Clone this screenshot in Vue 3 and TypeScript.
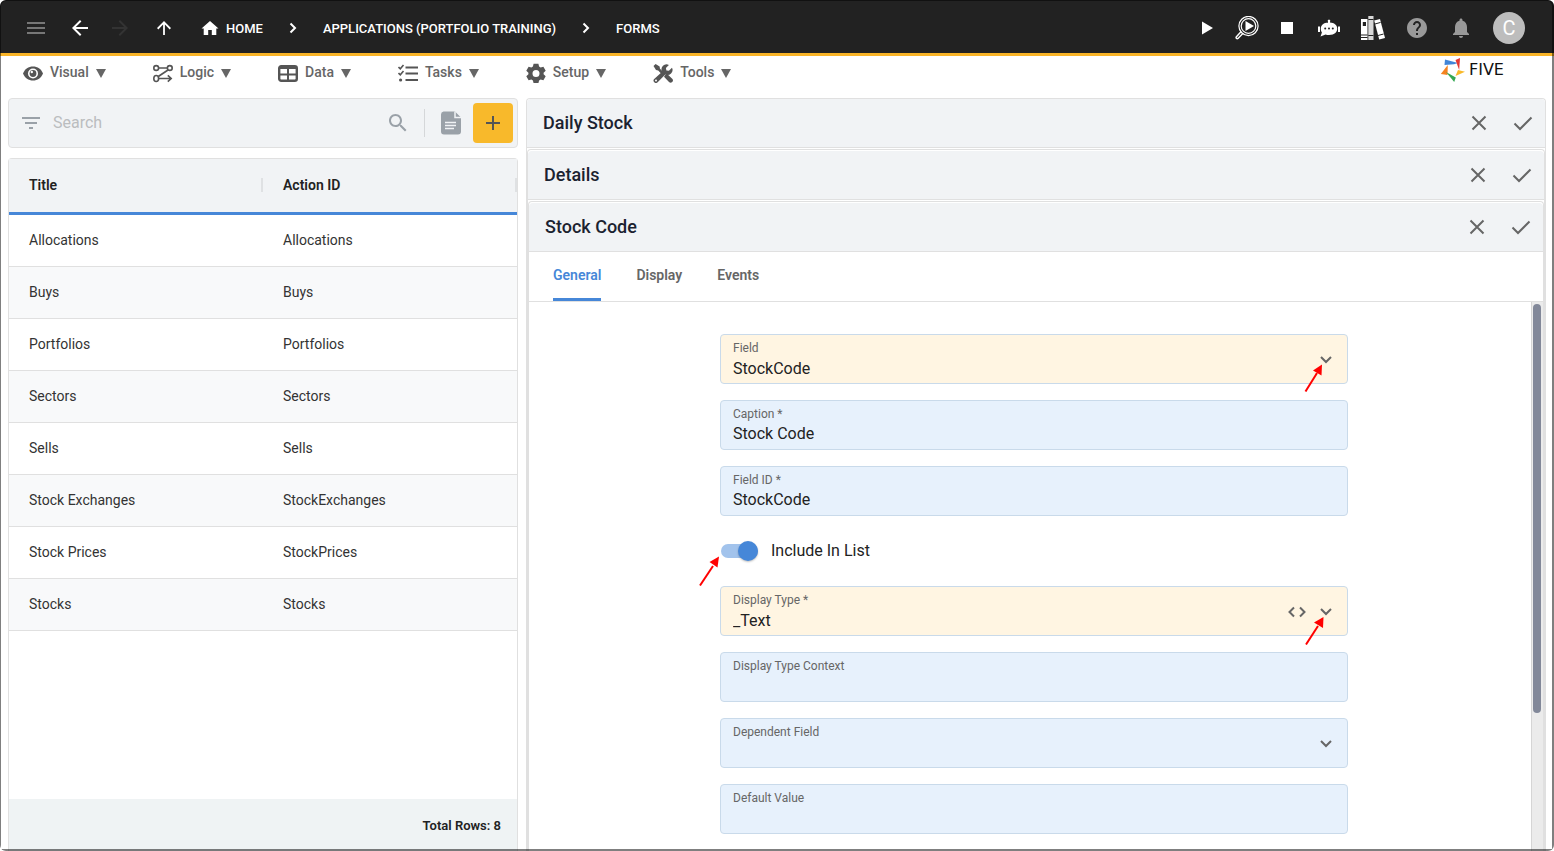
<script setup lang="ts">
import { ref } from 'vue'

interface MenuItem {
  label: string
  icon: string
}

interface Row {
  title: string
  actionId: string
}

const menu: MenuItem[] = [
  { label: 'Visual', icon: 'eye' },
  { label: 'Logic', icon: 'flow' },
  { label: 'Data', icon: 'grid' },
  { label: 'Tasks', icon: 'list' },
  { label: 'Setup', icon: 'gear' },
  { label: 'Tools', icon: 'tools' },
]

const rows: Row[] = [
  { title: 'Allocations', actionId: 'Allocations' },
  { title: 'Buys', actionId: 'Buys' },
  { title: 'Portfolios', actionId: 'Portfolios' },
  { title: 'Sectors', actionId: 'Sectors' },
  { title: 'Sells', actionId: 'Sells' },
  { title: 'Stock Exchanges', actionId: 'StockExchanges' },
  { title: 'Stock Prices', actionId: 'StockPrices' },
  { title: 'Stocks', actionId: 'Stocks' },
]

const tabs: string[] = ['General', 'Display', 'Events']
const activeTab = ref('General')

const search = ref('')
const field = ref('StockCode')
const caption = ref('Stock Code')
const fieldId = ref('StockCode')
const includeInList = ref(true)
const displayType = ref('_Text')
const displayContext = ref('')
const dependentField = ref('')
const defaultValue = ref('')
</script>

<template>
  <div class="page">
    <header class="topbar">
      <button class="icon-btn dim" aria-label="Menu">
        <svg viewBox="0 0 24 24"><path d="M3 18h18v-2H3v2zm0-5h18v-2H3v2zm0-7v2h18V6H3z" /></svg>
      </button>
      <div class="history">
        <button class="icon-btn" aria-label="Back">
          <svg viewBox="0 0 24 24"><path d="M20 11H7.8l5.6-5.6L12 4l-8 8 8 8 1.4-1.4L7.8 13H20z" /></svg>
        </button>
        <button class="icon-btn faint" aria-label="Forward">
          <svg viewBox="0 0 24 24"><path d="M4 11h12.2l-5.6-5.6L12 4l8 8-8 8-1.4-1.4 5.6-5.6H4z" /></svg>
        </button>
      </div>
      <button class="icon-btn" aria-label="Up">
        <svg viewBox="0 0 24 24"><path d="M11.1 19V8.6l-4.8 4.8L5 12.1 12 5l7 7.1-1.3 1.3-4.8-4.8V19z" /></svg>
      </button>
      <nav class="crumbs" aria-label="Breadcrumb">
        <a href="#home" class="crumb home">
          <svg viewBox="0 0 24 24"><path d="M10.200 19v-5h3.600v5h4.500v-6.500h2.200L12 5l-8.500 7.500h2.200V19z" /></svg>
          <span>HOME</span>
        </a>
        <svg class="sep" viewBox="0 0 8 12"><path d="M1.500 1.500L6 6l-4.500 4.500" /></svg>
        <a href="#applications" class="crumb">APPLICATIONS (PORTFOLIO TRAINING)</a>
        <svg class="sep" viewBox="0 0 8 12"><path d="M1.500 1.500L6 6l-4.500 4.500" /></svg>
        <a href="#forms" class="crumb">FORMS</a>
      </nav>
      <div class="run">
        <button class="icon-btn" aria-label="Run">
          <svg viewBox="0 0 24 24"><path d="M7 5.5v13L18 12z" /></svg>
        </button>
        <button class="icon-btn" aria-label="Inspect">
          <svg viewBox="0 0 24 24">
            <g fill="none" stroke="#fff">
              <circle cx="13.5" cy="10" r="9.6" stroke-width="1.2" />
              <circle cx="13.5" cy="10" r="7.3" stroke-width="1.2" />
              <path d="M6.2 15.6l-5 5.4c-.6 1 .8 2.2 1.8 1.4l5.1-5.2" stroke-width="1.4" />
            </g>
            <path d="M10.5 5v10l8.5-5z" />
          </svg>
        </button>
        <button class="icon-btn" aria-label="Stop">
          <svg viewBox="0 0 24 24"><path d="M6 6h12v12H6z" /></svg>
        </button>
      </div>
      <div class="tools">
        <button class="icon-btn" aria-label="Assistant">
          <svg viewBox="0 0 24 24">
            <path d="M11 7V5.700a1.300 1.300 0 1 1 2 0V6.500c4.300.3 6.800 2.300 7.200 5.500.3 4-2.500 7-8.200 7-1.400 0-2.300-.1-3.400-.5L3.500 20.500l1.400-4C4 15.200 3.700 13.700 3.800 12 4.200 9 6.700 6.800 11 6.500zM1 10.500h2v5.500H1zM21 10.500h2V16h-2z" />
            <g fill="#222"><circle cx="8.200" cy="12.600" r="1" /><circle cx="12" cy="12.600" r="1" /><circle cx="15.800" cy="12.600" r="1" /></g>
          </svg>
        </button>
        <button class="icon-btn" aria-label="Library">
          <svg viewBox="0 0 24 24">
            <path d="M0 3h6.500v21H0z" />
            <path d="M7.300 0h5.200v24H7.300z" fill="#d8d8d8" />
            <path d="M13.200 4.500l5.800-1.600L24 22l-5.800 1.600z" />
            <g stroke="#222" fill="none">
              <path d="M0 19h6.500M0 21.500h6.500M7.300 3.500h5.200M7.300 19.500h5.200M14 8l5.600-1.600M17 19.500l5.600-1.500" />
            </g>
            <path d="M1.800 6h3.200v4H1.800z" fill="#222" />
          </svg>
        </button>
        <button class="icon-btn mid" aria-label="Help">
          <svg viewBox="0 0 24 24"><path d="M12 2C6.480 2 2 6.480 2 12s4.480 10 10 10 10-4.480 10-10S17.520 2 12 2zm1 17h-2v-2h2v2zm2.070-7.750l-.9.920C13.450 12.900 13 13.500 13 15h-2v-.5c0-1.100.45-2.100 1.170-2.830l1.240-1.260c.37-.36.59-.86.59-1.410 0-1.100-.9-2-2-2s-2 .9-2 2H8c0-2.210 1.790-4 4-4s4 1.790 4 4c0 .88-.36 1.680-.93 2.250z" /></svg>
        </button>
        <button class="icon-btn mid" aria-label="Notifications">
          <svg viewBox="0 0 24 24"><path d="M12 22c1.100 0 2-.9 2-2h-4c0 1.100.9 2 2 2zm6-6v-5c0-3.070-1.640-5.640-4.500-6.320V4c0-.83-.67-1.500-1.500-1.500s-1.500.67-1.500 1.500v.68C7.630 5.360 6 7.920 6 11v5l-2 2v1h16v-1l-2-2z" /></svg>
        </button>
        <button class="avatar" aria-label="Account">C</button>
      </div>
    </header>

    <div class="menubar">
      <nav class="menu" aria-label="Main">
        <button v-for="item in menu" :key="item.label" class="menu-item">
          <svg class="menu-icon" viewBox="0 0 20 20">
            <template v-if="item.icon === 'eye'">
              <path d="M0 10.500C1.800 6 5.500 3.500 10 3.500s8.200 2.500 10 7c-1.800 4.500-5.500 7-10 7s-8.200-2.500-10-7z" />
              <circle cx="10" cy="10.500" r="5" fill="#fff" />
              <circle cx="10" cy="10.500" r="3.400" />
              <circle cx="8.800" cy="9" r="1.200" fill="#fff" />
            </template>
            <g v-else-if="item.icon === 'flow'" fill="none" stroke="#555" stroke-width="1.600">
              <circle cx="3.200" cy="5" r="2.400" />
              <circle cx="16.800" cy="5" r="2.400" />
              <ellipse cx="3.200" cy="15.500" rx="2.400" ry="3" />
              <path d="M5.600 5h8.800M15 7L5.300 13.500M5.600 15.500h12M14.800 12.300l3.400 3.200-3.400 3.200" />
            </g>
            <g v-else-if="item.icon === 'grid'" fill="none" stroke="#555">
              <rect x="1.200" y="3.200" width="17.600" height="14.600" rx="2" stroke-width="2.400" />
              <path d="M1 4.500h18" stroke-width="3" />
              <path d="M10 5v13M1 11.500h18" stroke-width="2" />
            </g>
            <g v-else-if="item.icon === 'list'" fill="none" stroke="#555">
              <path d="M7.500 4.500H20M7.500 10.500H20M7.500 17H20" stroke-width="2.200" />
              <path d="M.5 4l1.800 1.800L5.500 2M.5 10l1.800 1.800L5.500 8" stroke-width="1.600" />
              <circle cx="2.600" cy="17" r="1.600" fill="#555" stroke="none" />
            </g>
            <path
              v-else-if="item.icon === 'gear'"
              fill-rule="evenodd"
              d="M7.600.8h4.800l.7 2.800 1.500.9 2.800-.8 2.300 4-2.100 2v1.600l2.100 2-2.300 4-2.800-.8-1.500.9-.7 2.800H7.600l-.7-2.800-1.500-.9-2.800.8-2.300-4 2.100-2V9.700l-2.100-2 2.300-4 2.800.8 1.500-.9zM10 7a3.500 3.500 0 1 0 0 7 3.500 3.500 0 0 0 0-7z"
            />
            <g v-else>
              <path d="M.5 3L2.600 1l4 2.500.4 2.300 3.800 3.800-1.800 1.800-3.800-3.900L3 7z" />
              <path d="M12 12.200l1.700-1.600 5.500 5.200a2.200 2.200 0 0 1-3.200 3.200l-5-5.300z" />
              <path d="M.9 16.200l8.300-7.400a5 5 0 0 1 6.700-6.900l-3 3 .5 2.500 2.500.4 3.100-3.100a5 5 0 0 1-6.700 6.700l-7.900 8.200a2.500 2.500 0 0 1-3.500-3.400z" />
              <circle cx="3" cy="17.500" r="1" fill="#fff" />
            </g>
          </svg>
          <span>{{ item.label }}</span>
          <svg class="caret" viewBox="0 0 10 9"><path d="M0 0h10L5 9z" /></svg>
        </button>
      </nav>
      <a href="#five" class="brand" aria-label="Five">
        <svg viewBox="0 0 24 24">
          <path d="M5 1.500l13 3.500-4 1.200-9.500.8z" fill="#4285d8" />
          <path d="M15.500 2l4.500-2-.8 12z" fill="#e53935" />
          <path d="M.800 16l7-9L7.500 17z" fill="#f58220" />
          <path d="M15.500 18l2.500-6 7 1.800z" fill="#f9b92a" />
          <path d="M6 14l9.800 5.500L14.200 24z" fill="#34a853" />
        </svg>
        <span>FIVE</span>
      </a>
    </div>

    <main class="content">
      <section class="left">
        <div class="searchbar">
          <button class="icon-btn grey" aria-label="Filter">
            <svg viewBox="0 0 24 24"><path d="M10 18h4v-2h-4v2zM3 6v2h18V6H3zm3 7h12v-2H6v2z" /></svg>
          </button>
          <input v-model="search" class="search-input" type="text" placeholder="Search" aria-label="Search" />
          <button class="icon-btn grey" aria-label="Run search">
            <svg viewBox="0 0 24 24"><path d="M15.500 14h-.79l-.28-.27C15.410 12.590 16 11.110 16 9.500 16 5.910 13.090 3 9.500 3S3 5.910 3 9.500 5.910 16 9.500 16c1.610 0 3.090-.59 4.230-1.570l.27.280v.79l5 4.990L20.490 19l-4.990-5zm-6 0C7.010 14 5 11.990 5 9.500S7.010 5 9.500 5 14 7.010 14 9.500 11.990 14 9.500 14z" /></svg>
          </button>
          <span class="divider"></span>
          <button class="icon-btn grey" aria-label="Report">
            <svg viewBox="0 0 24 24">
              <path d="M4.500.5H16l6 6v14a3 3 0 0 1-3 3H5a3 3 0 0 1-3-3v-17a3 3 0 0 1 2.500-3z" />
              <path d="M16 .5v6h6" fill="none" stroke="#f1f3f5" stroke-width="1.500" />
              <path d="M6 11.500h11M6 14.500h11M6 17.500h9" stroke="#f1f3f5" stroke-width="1.400" />
            </svg>
          </button>
          <button class="add" aria-label="Add">
            <svg viewBox="0 0 24 24"><path d="M12 5v14M5 12h14" /></svg>
          </button>
        </div>

        <div class="list">
          <table>
            <thead>
              <tr>
                <th scope="col"><span>Title</span></th>
                <th scope="col"><span>Action ID</span></th>
              </tr>
            </thead>
            <tbody>
              <tr v-for="row in rows" :key="row.title">
                <td>{{ row.title }}</td>
                <td>{{ row.actionId }}</td>
              </tr>
            </tbody>
          </table>
          <footer class="total">Total Rows: {{ rows.length }}</footer>
        </div>
      </section>

      <section class="panel">
        <header class="panel-head">
          <h2>Daily Stock</h2>
          <button class="icon-btn act" aria-label="Cancel Daily Stock"><svg viewBox="0 0 24 24"><path d="M5.500 5.500l13 13M18.500 5.500l-13 13" /></svg></button>
          <button class="icon-btn act" aria-label="Save Daily Stock"><svg viewBox="0 0 24 24"><path d="M3.500 12.500l5.500 5.500L20.500 6.500" /></svg></button>
        </header>
        <section class="panel nested">
          <header class="panel-head">
            <h2>Details</h2>
            <button class="icon-btn act" aria-label="Cancel Details"><svg viewBox="0 0 24 24"><path d="M5.500 5.500l13 13M18.500 5.500l-13 13" /></svg></button>
            <button class="icon-btn act" aria-label="Save Details"><svg viewBox="0 0 24 24"><path d="M3.500 12.500l5.500 5.500L20.500 6.500" /></svg></button>
          </header>
          <section class="panel nested">
            <header class="panel-head">
              <h2>Stock Code</h2>
              <button class="icon-btn act" aria-label="Cancel Stock Code"><svg viewBox="0 0 24 24"><path d="M5.500 5.500l13 13M18.500 5.500l-13 13" /></svg></button>
              <button class="icon-btn act" aria-label="Save Stock Code"><svg viewBox="0 0 24 24"><path d="M3.500 12.500l5.500 5.500L20.500 6.500" /></svg></button>
            </header>
            <div class="tabs" role="tablist">
              <button
                v-for="tab in tabs"
                :key="tab"
                role="tab"
                class="tab"
                :class="{ active: tab === activeTab }"
                :aria-selected="tab === activeTab"
                @click="activeTab = tab"
              >
                {{ tab }}
              </button>
            </div>
            <div class="body">
              <div class="scroll">
                <form class="form" @submit.prevent>
                  <div class="field warm">
                    <label for="field">Field</label>
                    <select id="field" v-model="field"><option>StockCode</option></select>
                    <svg class="chev" viewBox="0 0 12 8"><path d="M1 1l5 5 5-5" /></svg>
                    <svg class="arrow at-select" viewBox="0 0 20 30"><path d="M1.500 28.500L13 10" /><path class="tip" d="M18 1.500l-.5 11-8.500-5z" /></svg>
                  </div>
                  <div class="field">
                    <label for="caption">Caption *</label>
                    <input id="caption" v-model="caption" type="text" />
                  </div>
                  <div class="field">
                    <label for="field-id">Field ID *</label>
                    <input id="field-id" v-model="fieldId" type="text" />
                  </div>
                  <div class="toggle">
                    <input id="include" v-model="includeInList" type="checkbox" role="switch" />
                    <label for="include">Include In List</label>
                    <svg class="arrow at-toggle" viewBox="0 0 20 30"><path d="M1 29.500L14 10" /><path class="tip" d="M20 .5l-1.500 11-8-5.500z" /></svg>
                  </div>
                  <div class="field warm">
                    <label for="display-type">Display Type *</label>
                    <select id="display-type" v-model="displayType"><option>_Text</option></select>
                    <button type="button" class="code" aria-label="Edit code">
                      <svg viewBox="0 0 18 12"><path d="M6 1.500L1.500 6 6 10.500M12 1.500L16.500 6 12 10.500" /></svg>
                    </button>
                    <svg class="chev" viewBox="0 0 12 8"><path d="M1 1l5 5 5-5" /></svg>
                    <svg class="arrow at-select" viewBox="0 0 20 30"><path d="M2 29.500L14 11" /><path class="tip" d="M19.500 2l-.5 11-9-5.500z" /></svg>
                  </div>
                  <div class="field">
                    <label for="context">Display Type Context</label>
                    <input id="context" v-model="displayContext" type="text" />
                  </div>
                  <div class="field">
                    <label for="dependent">Dependent Field</label>
                    <select id="dependent" v-model="dependentField"><option value=""></option></select>
                    <svg class="chev" viewBox="0 0 12 8"><path d="M1 1l5 5 5-5" /></svg>
                  </div>
                  <div class="field">
                    <label for="default">Default Value</label>
                    <input id="default" v-model="defaultValue" type="text" />
                  </div>
                </form>
              </div>
              <div class="track"><div class="thumb"></div></div>
            </div>
          </section>
        </section>
      </section>
    </main>
  </div>
</template>

<style>
html,
body {
  margin: 0;
  height: 100%;
}
</style>

<style scoped>
* {
  box-sizing: border-box;
}
.page {
  position: relative;
  display: flex;
  flex-direction: column;
  height: 100vh;
  overflow: hidden;
  border-radius: 6px;
  background: #fff;
  color: #222;
  font-family: Roboto, 'Liberation Sans', sans-serif;
  font-size: 14px;
}
.page::after {
  content: '';
  position: absolute;
  inset: 0;
  border: 1px solid rgba(0, 0, 0, 0.5);
  border-width: 1px 2px 2px 1px;
  border-radius: 6px 6px 2px 2px;
  pointer-events: none;
}
button {
  padding: 0;
  border: 0;
  background: none;
  color: inherit;
  font: inherit;
  cursor: pointer;
}
svg {
  display: block;
  fill: currentColor;
}
.icon-btn {
  flex: none;
  width: 24px;
  height: 24px;
}
.icon-btn svg {
  width: 24px;
  height: 24px;
}
.topbar {
  display: flex;
  align-items: center;
  gap: 20px;
  flex: none;
  height: 56px;
  padding: 3px 29px 0 24px;
  border-bottom: 3px solid #f9b427;
  background: #222;
  color: #fff;
}
.history,
.run {
  display: flex;
  gap: 16px;
}
.run {
  margin-right: -2px;
}
.tools {
  display: flex;
  align-items: center;
  gap: 20px;
}
.dim {
  color: #777;
}
.faint {
  color: #333;
}
.mid {
  color: #999;
}
.grey {
  color: #9aa1a8;
}
.crumbs {
  display: flex;
  align-items: center;
  gap: 26px;
  flex: 1;
  padding-left: 2px;
}
.crumb {
  color: #fff;
  font-size: 13px;
  font-weight: 500;
  text-decoration: none;
  white-space: nowrap;
}
.home {
  display: flex;
  align-items: center;
  gap: 4px;
}
.home svg {
  width: 24px;
  height: 24px;
}
.sep {
  width: 8px;
  height: 12px;
  fill: none;
  stroke: #fff;
  stroke-width: 2;
}
.avatar {
  width: 32px;
  height: 32px;
  border-radius: 50%;
  background: #bdbdbd;
  color: #fff;
  font-size: 20px;
}
.menubar {
  display: flex;
  justify-content: space-between;
  align-items: center;
  flex: none;
  height: 34px;
  padding: 0 26px 0 23px;
}
.menu {
  display: flex;
  gap: 47px;
}
.menu-item {
  display: flex;
  align-items: center;
  gap: 7px;
  color: #666;
  font-size: 14px;
  font-weight: 500;
}
.menu-item span {
  padding-bottom: 2px;
}
.menu-icon {
  width: 20px;
  height: 20px;
  color: #555;
}
.caret {
  width: 10px;
  height: 9px;
}
.brand {
  display: flex;
  align-items: center;
  gap: 5px;
  width: 88px;
  margin-bottom: 6px;
  color: #111;
  font-family: 'DejaVu Sans', sans-serif;
  font-size: 16px;
  line-height: 24px;
  text-decoration: none;
}
.brand svg {
  width: 24px;
  height: 24px;
  overflow: visible;
}
.content {
  display: grid;
  grid-template-columns: 1fr 2fr;
  grid-template-rows: minmax(0, 1fr);
  gap: 8px;
  flex: 1;
  min-height: 0;
  padding: 8px 8px 0;
}
.left {
  display: flex;
  flex-direction: column;
  gap: 10px;
  min-width: 0;
}
.searchbar {
  display: flex;
  align-items: center;
  flex: none;
  height: 50px;
  padding: 0 4px 0 10px;
  border: 1px solid #e0e0e0;
  border-radius: 4px;
  background: #f1f3f5;
}
.search-input {
  flex: 1;
  min-width: 0;
  height: 40px;
  padding: 0 10px 2px;
  border: 0;
  outline: 0;
  background: transparent;
  color: #222;
  font: inherit;
  font-size: 16px;
}
.search-input::placeholder {
  color: #bbbdbf;
}
.divider {
  width: 1px;
  height: 28px;
  margin: 0 14px;
  background: #d5d7d9;
}
.add {
  width: 40px;
  height: 40px;
  margin-left: 10px;
  border-radius: 4px;
  background: #f8b92b;
}
.add svg {
  width: 24px;
  height: 24px;
  margin: 0 auto;
  stroke: #555;
  stroke-width: 2;
}
.list {
  display: flex;
  flex-direction: column;
  justify-content: space-between;
  flex: 1;
  min-height: 0;
  border: 1px solid #e0e0e0;
  border-bottom: 0;
  border-radius: 4px 4px 0 0;
}
table {
  width: 100%;
  table-layout: fixed;
  border-collapse: separate;
  border-spacing: 0;
}
th {
  height: 56px;
  padding: 0 0 2px 20px;
  border-bottom: 3px solid #4687d8;
  background: #f1f3f5;
  font-weight: 600;
  text-align: left;
}
th span {
  display: block;
  border-right: 2px solid #dfe1e3;
  line-height: 14px;
}
td {
  height: 52px;
  padding: 0 20px 2px;
  border-bottom: 1px solid #e0e0e0;
  color: #333;
}
tbody tr:nth-child(even) {
  background: #f8f9fa;
}
.total {
  height: 52px;
  padding-right: 16px;
  background: #eff3f4;
  font-size: 13px;
  font-weight: 600;
  line-height: 53px;
  text-align: right;
}
.panel {
  display: flex;
  flex-direction: column;
  min-width: 0;
  min-height: 0;
  border: 1px solid #e0e0e0;
  border-bottom: 0;
  border-radius: 4px 4px 0 0;
  background: #fff;
}
.nested {
  flex: 1;
  margin-top: 1px;
  padding-top: 1px;
}
.panel-head {
  display: flex;
  align-items: center;
  gap: 20px;
  flex: none;
  height: 49px;
  padding: 0 10px 0 16px;
  border-bottom: 1px solid #e0e0e0;
  border-radius: 4px 4px 0 0;
  background: #f1f3f5;
}
h2 {
  flex: 1;
  margin: 0;
  padding-bottom: 2px;
  color: #1b2230;
  font-size: 18px;
  font-weight: 500;
}
.act svg {
  fill: none;
  stroke: #666;
  stroke-width: 2;
}
.tabs {
  display: flex;
  gap: 35px;
  flex: none;
  height: 50px;
  padding: 0 24px;
  border-bottom: 1px solid #e0e0e0;
}
.tab {
  border-bottom: 3px solid transparent;
  color: #666;
  font-weight: 600;
}
.tab.active {
  border-bottom-color: #4687d8;
  color: #4687d8;
}
.body {
  display: flex;
  flex: 1;
  min-height: 0;
}
.scroll {
  flex: 1;
  min-width: 0;
  overflow: hidden;
  padding: 32px 0 16px 8px;
}
.track {
  flex: none;
  width: 12px;
  padding: 2px 1px;
  border-left: 1px solid #d5d5d5;
  background: #ebebeb;
}
.thumb {
  width: 8px;
  height: 75%;
  border-radius: 4px;
  background: #828899;
}
.form {
  display: flex;
  flex-direction: column;
  gap: 16px;
  max-width: 628px;
  margin: 0 auto;
}
.field {
  position: relative;
  flex: none;
  height: 50px;
  border: 1px solid #c9daea;
  border-radius: 4px;
  background: #e7f1fc;
}
.warm {
  background: #fff5e2;
}
.field label {
  position: absolute;
  top: 6px;
  left: 12px;
  color: #666;
  font-size: 12px;
  line-height: 14px;
}
.field input,
.field select {
  appearance: none;
  width: 100%;
  height: 48px;
  padding: 18px 12px 0;
  border: 0;
  outline: 0;
  background: transparent;
  color: #222;
  font: inherit;
  font-size: 16px;
}
.field input {
  padding-top: 16px;
}
.chev {
  position: absolute;
  top: 21px;
  right: 15px;
  width: 12px;
  height: 8px;
  fill: none;
  stroke: #666;
  stroke-width: 2;
  pointer-events: none;
}
.code {
  position: absolute;
  top: 19px;
  right: 41px;
}
.code svg {
  width: 18px;
  height: 12px;
  fill: none;
  stroke: #666;
  stroke-width: 2;
}
.arrow {
  position: absolute;
  z-index: 1;
  width: 20px;
  height: 30px;
  fill: none;
  stroke: #f00;
  stroke-width: 2;
  pointer-events: none;
}
.tip {
  fill: #f00;
  stroke: none;
}
.at-select {
  top: 28px;
  right: 23px;
}
.at-toggle {
  top: 24px;
  left: -21px;
}
.toggle {
  position: relative;
  display: flex;
  align-items: center;
  gap: 13px;
  height: 38px;
  font-size: 16px;
}
.toggle label {
  padding-bottom: 2px;
}
.toggle input {
  appearance: none;
  display: flex;
  align-items: center;
  justify-content: flex-end;
  width: 37px;
  height: 14px;
  margin: 0 0 0 1px;
  border-radius: 7px;
  background: #a2c3ec;
}
.toggle input::after {
  content: '';
  flex: none;
  width: 20px;
  height: 20px;
  border-radius: 50%;
  background: #4687d8;
  box-shadow: 0 1px 2px rgba(0, 0, 0, 0.25);
}
.toggle input:not(:checked) {
  justify-content: flex-start;
}
</style>
